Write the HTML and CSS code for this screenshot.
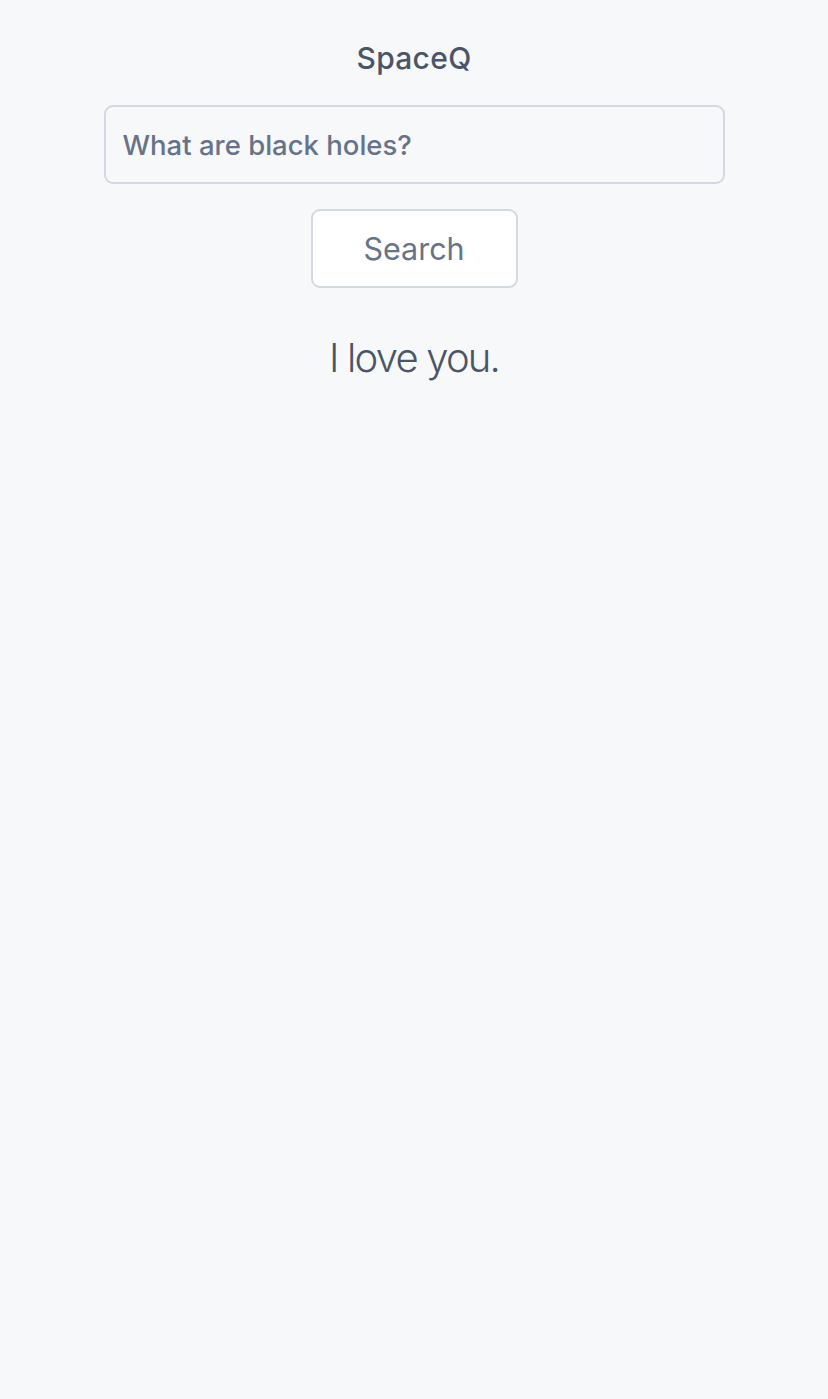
FILE: index.html
```html
<!DOCTYPE html>
<html lang="en">
<head>
    <meta charset="UTF-8">
    <meta name="viewport" content="width=device-width, initial-scale=1.0">
    <title>SpaceQ</title>
    <link rel="stylesheet" href="styles.css">
</head>
<body>
    <div class="container">
        <h1 class="title">SpaceQ</h1>

        <form class="search-form">
            <input type="text" class="search-input" value="What are black holes?">
            <button type="button" class="search-button">Search</button>
        </form>

        <p class="answer">I love you.</p>
    </div>
</body>
</html>
```

FILE: styles.css
```css
body {
    margin: 0;
    font-family: Inter, "Noto Sans", sans-serif;
    background-color: #f7f8fa;
    min-height: 100vh;
}

.container {
    display: flex;
    flex-direction: column;
    align-items: center;
    padding-top: 38px;
}

.title {
    margin: 0;
    font-size: 30px;
    font-weight: 500;
    line-height: 40px;
    letter-spacing: 0.3px;
    color: #4a5568;
}

.search-form {
    display: flex;
    flex-direction: column;
    align-items: center;
    margin-top: 27px;
}

.search-input {
    box-sizing: border-box;
    width: 621px;
    height: 79px;
    padding: 0 17px;
    border: 2px solid #d3d8e2;
    border-radius: 9px;
    background-color: #f7f8fa;
    font-family: inherit;
    font-size: 27.5px;
    font-weight: 500;
    color: #667389;
}

.search-button {
    box-sizing: border-box;
    width: 207px;
    height: 79px;
    margin-top: 25px;
    border: 2px solid #d3d8e2;
    border-radius: 9px;
    background-color: #fff;
    font-family: inherit;
    font-size: 30.5px;
    font-weight: 400;
    color: #667389;
    cursor: pointer;
}

.answer {
    margin: 35px 0 0;
    font-size: 40px;
    font-weight: 300;
    line-height: 70px;
    letter-spacing: -1.8px;
    color: #4a5568;
}
```
